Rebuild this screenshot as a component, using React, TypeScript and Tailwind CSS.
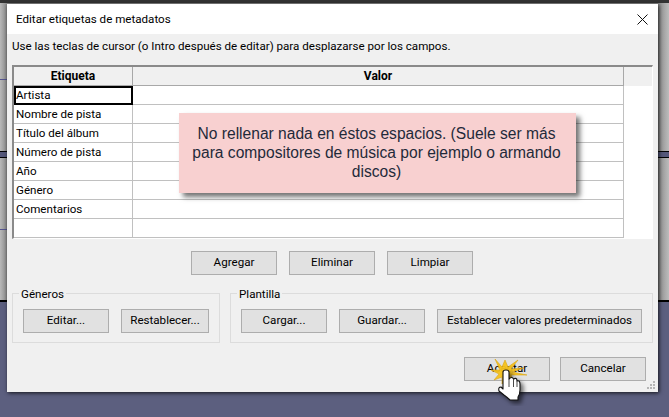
const rows = ["Artista", "Nombre de pista", "Título del álbum", "Número de pista", "Año", "Género", "Comentarios", ""];

function Btn({ label, w }: { label: string; w: string }) {
  return (
    <button className={`${w} h-[24px] shrink-0 bg-[#e1e1e1] border border-[#adadad] text-[11.6px] text-black flex items-center justify-center whitespace-nowrap`}>
      {label}
    </button>
  );
}

function Group({ title, w, children }: { title: string; w: string; children: React.ReactNode }) {
  return (
    <div className={`${w} h-[50px] relative border border-[#dcdcdc] flex gap-[12px] pt-[15px] pl-[10px]`}>
      <span className="absolute -top-[7px] left-[6px] bg-[#f0f0f0] px-[2px] leading-[15px] text-[11.6px] text-black">{title}</span>
      {children}
    </div>
  );
}

function Hand() {
  return (
    <svg className="absolute left-[476px] top-[356px]" width="56" height="50" viewBox="0 0 56 50">
      <polygon
        points="19,3 26,11 29,4 32,11 42,4 35,13 48,12 36,16 51,19 35,19 38,26 31,21 26,28 26,21 18,24 23,18 15,14 24,14"
        fill="#f6c21c"
        stroke="#d9a30a"
        strokeWidth="0.6"
        opacity="0.95"
      />
      <g className="drop-shadow-[3px_3px_2px_rgba(0,0,0,0.55)]">
        <path
          d="M27 16 Q27 14 30 14 Q33 14 33 16 L33 23 Q36 20 37.5 23 Q41 21 41 25 Q44 24 44 28 L44 34 Q44 38 42 41 L42 44 L34 44 Q32 42 28 39 L23 35 Q22 31 25 31 L27 33 Z"
          fill="#fff"
          stroke="#111"
          strokeWidth="1.1"
          strokeLinejoin="round"
        />
        <path d="M33 23 L33 31 M37.5 23 L37.5 31 M41 25 L41 31" stroke="#333" strokeWidth="0.9" fill="none" />
      </g>
    </svg>
  );
}

export default function App() {
  return (
    <div className="w-[669px] h-[417px] relative overflow-hidden bg-[#5c5f7f]" style={{ fontFamily: "Roboto, sans-serif" }}>
      {/* ventana de atras */}
      <div className="absolute inset-x-0 top-0 h-[302px] border-t-[3px] border-b-[2px] border-t-[#333] border-b-black bg-[linear-gradient(90deg,#b8b8b8_0px,#8a8a8a_7px,#8a8a8a_658px,#bcbcbc_669px)]" />
      <div className="absolute inset-x-0 top-[151px] h-[7px] border-y border-black bg-[#55587a]" />
      <div className="absolute left-0 w-[7px] top-[79px] h-px bg-[#55558f]" />
      <div className="absolute left-0 w-[7px] top-[229px] h-px bg-[#55558f]" />

      <div className="absolute left-[7px] top-[4px] w-[651px] h-[388px] flex flex-col bg-[#f0f0f0] shadow-[1px_1px_4px_rgba(0,0,0,0.8)]">
        <div className="h-[30px] shrink-0 bg-white flex items-center justify-between pl-[9px] pr-[10px]">
          <span className="text-[11.6px] text-black pt-[1px]">Editar etiquetas de metadatos</span>
          <svg width="11" height="11" viewBox="0 0 11 11"><path d="M0.5 0.5 L10.5 10.5 M10.5 0.5 L0.5 10.5" stroke="#111" strokeWidth="1" /></svg>
        </div>

        <div className="pl-[5px] h-[31px] text-[11.6px] leading-[18px] pt-[3px] text-black shrink-0">
          Use las teclas de cursor (o Intro después de editar) para desplazarse por los campos.
        </div>

        <div className="ml-[5px] w-[641px] h-[174px] shrink-0 bg-white border-t-[2px] border-l-[2px] border-[#8a8a8a] border-r border-b border-r-white border-b-white flex flex-col">
          <div className="flex h-[19px] bg-[#f0f0f0] shrink-0">
            <div className="w-[119px] border-r border-b border-[#a8a8a8] text-[12px] font-bold text-center leading-[18px]">Etiqueta</div>
            <div className="w-[491px] border-r border-b border-[#a8a8a8] text-[12px] font-bold text-center leading-[18px]">Valor</div>
            <div className="flex-1" />
          </div>
          {rows.map((r, i) => (
            <div key={i} className="flex h-[19px] shrink-0">
              <div className={`w-[119px] text-[11.6px] ${i === 0 ? "border-2 border-black leading-[15px]" : "border-r border-b border-[#c0c0c0] leading-[18px] pl-[2px]"}`}>{r}</div>
              <div className="w-[491px] border-r border-b border-[#c0c0c0]" />
            </div>
          ))}
        </div>

        <div className="flex justify-start gap-[12px] pl-[184px] pt-[12px] h-[54px] shrink-0">
          <Btn label="Agregar" w="w-[86px]" />
          <Btn label="Eliminar" w="w-[86px]" />
          <Btn label="Limpiar" w="w-[86px]" />
        </div>

        <div className="flex gap-[10px] pl-[5px] shrink-0">
          <Group title="Géneros" w="w-[208px]">
            <Btn label="Editar..." w="w-[86px]" />
            <Btn label="Restablecer..." w="w-[88px]" />
          </Group>
          <Group title="Plantilla" w="w-[423px]">
            <Btn label="Cargar..." w="w-[86px]" />
            <Btn label="Guardar..." w="w-[86px]" />
            <Btn label="Establecer valores predeterminados" w="w-[205px]" />
          </Group>
        </div>

        <div className="flex justify-end gap-[10px] pr-[12px] pt-[14px]">
          <Btn label="Aceptar" w="w-[86px]" />
          <Btn label="Cancelar" w="w-[86px]" />
        </div>

        {/* grip */}
        <svg className="absolute right-[2px] bottom-[2px]" width="9" height="9" viewBox="0 0 9 9" fill="#b5b5b5">
          <rect x="6" y="0" width="2" height="2" />
          <rect x="3" y="3" width="2" height="2" />
          <rect x="6" y="3" width="2" height="2" />
          <rect x="0" y="6" width="2" height="2" />
          <rect x="3" y="6" width="2" height="2" />
          <rect x="6" y="6" width="2" height="2" />
        </svg>
      </div>

      <div className="absolute left-[179px] top-[113px] w-[397px] h-[80px] bg-[#f8d0d0] shadow-[4px_4px_5px_rgba(0,0,0,0.55)] flex items-center justify-center text-center text-[15.6px] leading-[19px] text-[#1f2a3a] pl-[10px] pr-[12px] pb-[2px]" style={{ fontFamily: "'Liberation Sans', sans-serif" }}>
        No rellenar nada en éstos espacios. (Suele ser más para compositores de música por ejemplo o armando discos)
      </div>

      <Hand />
    </div>
  );
}
